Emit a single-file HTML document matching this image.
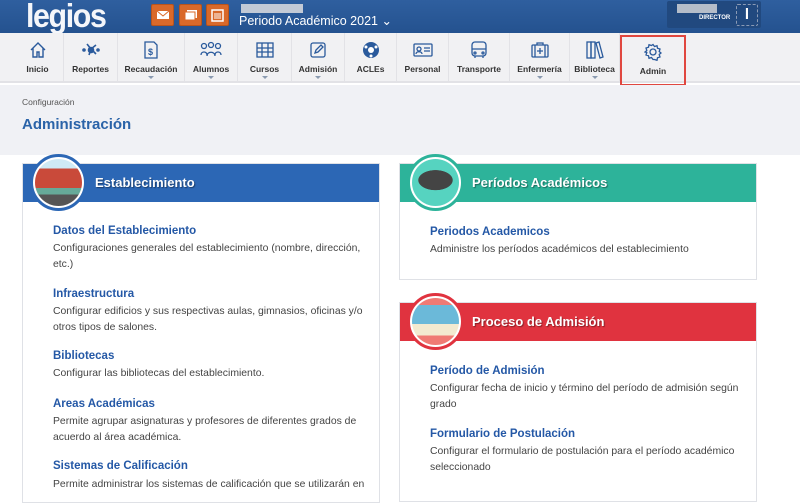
<!DOCTYPE html>
<html><head><meta charset="utf-8"><style>
*{box-sizing:border-box;margin:0;padding:0}
body{width:800px;height:493px;overflow:hidden;font-family:"Liberation Sans",sans-serif;background:#fff;position:relative}
.top{position:absolute;left:0;top:0;width:800px;height:33px;background:linear-gradient(#2f5f9f,#24528f)}
.logo{position:absolute;left:26px;top:-3px;font:bold 33px "Liberation Sans",sans-serif;color:#f4f6fa;letter-spacing:-1.5px;transform:scaleX(.92);transform-origin:left}
.ob{position:absolute;top:4px;width:23px;height:22px;background:#d9692a;border:1px solid #b9541c;border-radius:2px}
.per{position:absolute;left:239px;top:13px;color:#fff;font-size:12.5px}
.blur{position:absolute;background:#c3cad6;height:9px;top:4px}
.dir{position:absolute;left:667px;top:1px;width:94px;height:27px;background:#21497f;border-radius:2px}
.nav{position:absolute;left:0;top:33px;width:800px;height:50px;background:#f1f1f3;border-bottom:2px solid #e2e2e6}
.it{position:absolute;top:0;height:48px;text-align:center;font-size:8.5px;font-weight:bold;color:#333;border-right:1px solid #e2e2e6}
.it svg{position:absolute;top:8px;left:50%;margin-left:-9px}
.it span{position:absolute;left:0;right:0;top:31px}
.it i{position:absolute;left:50%;margin-left:-3px;top:43px;border:3px solid transparent;border-top:3px solid #8a9ab0}
.grey{position:absolute;left:0;top:85px;width:800px;height:70px;background:#f0f1f5}
.bc{position:absolute;left:22px;top:97px;font-size:8.5px;color:#555}
.h1{position:absolute;left:22px;top:116px;font-size:15px;font-weight:bold;color:#2a63a8}
.panel{position:absolute;border:1px solid #dfe1e6;background:#fff}
.ph{position:absolute;left:0;right:0;top:0;height:38px}
.ph b{position:absolute;left:72px;top:11px;color:#fff;font-size:13px;text-shadow:1px 1px 1px rgba(0,0,0,.4)}
.circ{position:absolute;left:7px;top:-10px;width:57px;height:57px;border-radius:50%;border:3px solid;background:#fff}
.circ div{position:absolute;left:2px;top:2px;width:47px;height:47px;border-radius:50%}
.l{position:absolute;font-size:11.5px;font-weight:bold;color:#2458a6}
.d{position:absolute;font-size:10.4px;color:#444;line-height:16px}
</style></head><body>
<div class="top">
<div class="logo">legios</div>
<div class="ob" style="left:151px"></div><div class="ob" style="left:179px"></div><div class="ob" style="left:206px"></div>
<svg style="position:absolute;left:156px;top:10px" width="14" height="10"><rect x="1" y="1" width="12" height="8" fill="#fff"/><path d="M1 1l6 5 6-5" stroke="#d9692a" fill="none"/></svg>
<svg style="position:absolute;left:184px;top:9px" width="14" height="12"><rect x="3" y="1" width="10" height="8" fill="#fff"/><rect x="1" y="3" width="10" height="8" fill="#fff" stroke="#d9692a"/></svg>
<svg style="position:absolute;left:211px;top:8px" width="13" height="14"><rect x="1" y="2" width="11" height="11" fill="none" stroke="#fff" stroke-width="1.5"/><path d="M3 6h7M3 8h7M3 10h7" stroke="#fff"/></svg>
<div class="blur" style="left:241px;width:62px"></div>
<div class="per">Periodo Académico 2021 ⌄</div>
<div class="dir"><div style="position:absolute;left:10px;top:3px;width:40px;height:9px;background:#b5bdc9"></div><div style="position:absolute;left:32px;top:14px;font-size:6px;color:#fff;font-weight:bold">DIRECTOR</div><div style="position:absolute;left:69px;top:3px;width:22px;height:22px;border:1px dashed #8a9ab5;border-radius:2px;color:#fff;font-weight:bold;font-size:15px;text-align:center;line-height:20px">l</div></div>
</div>
<div class="nav">
<div class="it" style="left:12px;width:52px"><svg width="18" height="18" fill="none" stroke="#2a5a9c" stroke-width="1.4"><path d="M2 9L9 2l7 7M4 7v9h4v-5h2v5h4V7"/></svg><span>Inicio</span></div>
<div class="it" style="left:64px;width:54px"><svg width="18" height="18" fill="none" stroke="#2a5a9c" stroke-width="1.6"><path d="M5 3l4 5 5-4M9 8l-2 6M9 8l5 5"/><circle cx="9" cy="9" r="2.5" fill="#2a5a9c"/><circle cx="2" cy="9" r="1" fill="#9ab"/><circle cx="16" cy="9" r="1" fill="#9ab"/></svg><span>Reportes</span></div>
<div class="it" style="left:118px;width:67px"><svg width="18" height="18" fill="none" stroke="#2a5a9c" stroke-width="1.3"><path d="M3 1h9l3 3v13H3z"/><text x="6" y="14" font-size="9" fill="#2a5a9c" stroke="none">$</text></svg><span>Recaudación</span><i></i></div>
<div class="it" style="left:185px;width:53px"><svg width="22" height="18" style="margin-left:-11px" fill="none" stroke="#2a5a9c" stroke-width="1.3"><circle cx="4" cy="5" r="2.5"/><circle cx="11" cy="4" r="2.5"/><circle cx="18" cy="5" r="2.5"/><path d="M1 14c0-4 6-4 6 0M7 15c0-5 8-5 8 0M15 14c0-4 6-4 6 0"/></svg><span>Alumnos</span><i></i></div>
<div class="it" style="left:238px;width:54px"><svg width="18" height="18" fill="none" stroke="#2a5a9c" stroke-width="1.3"><rect x="1" y="2" width="16" height="14"/><path d="M1 7h16M1 11h16M6 2v14M12 2v14"/></svg><span>Cursos</span><i></i></div>
<div class="it" style="left:292px;width:53px"><svg width="18" height="18" fill="none" stroke="#2a5a9c" stroke-width="1.3"><rect x="2" y="2" width="14" height="14" rx="2"/><path d="M6 12l1-3 5-5 2 2-5 5z"/></svg><span>Admisión</span><i></i></div>
<div class="it" style="left:345px;width:52px"><svg width="18" height="18"><circle cx="9" cy="9" r="8" fill="#2a5a9c"/><circle cx="9" cy="9" r="3" fill="#fff"/><circle cx="4" cy="6" r="1.5" fill="#fff"/><circle cx="14" cy="6" r="1.5" fill="#fff"/><circle cx="9" cy="15" r="1.5" fill="#fff"/></svg><span>ACLEs</span></div>
<div class="it" style="left:397px;width:52px"><svg width="20" height="18" style="margin-left:-10px" fill="none" stroke="#2a5a9c" stroke-width="1.3"><rect x="1" y="3" width="18" height="12" rx="1"/><circle cx="6" cy="8" r="2"/><path d="M3 13c0-3 6-3 6 0M11 7h6M11 10h6"/></svg><span>Personal</span></div>
<div class="it" style="left:449px;width:61px"><svg width="18" height="18" fill="none" stroke="#2a5a9c" stroke-width="1.3"><rect x="2" y="1" width="14" height="14" rx="3"/><path d="M2 8h14M5 15v2M13 15v2"/><circle cx="5" cy="12" r="1"/><circle cx="13" cy="12" r="1"/></svg><span>Transporte</span></div>
<div class="it" style="left:510px;width:60px"><svg width="18" height="18" fill="none" stroke="#2a5a9c" stroke-width="1.3"><rect x="1" y="4" width="16" height="12" rx="1"/><path d="M6 4V2h6v2M9 7v6M6 10h6M4 4v12M14 4v12"/></svg><span>Enfermería</span><i></i></div>
<div class="it" style="left:570px;width:50px"><svg width="18" height="18" fill="none" stroke="#2a5a9c" stroke-width="1.3"><rect x="1" y="1" width="4" height="16"/><rect x="5" y="1" width="4" height="16"/><path d="M10 2l3-1 4 15-3 1z"/></svg><span>Biblioteca</span><i></i></div>
<div class="it" style="left:620px;width:66px;border:2px solid #e0473f;height:51px;top:2px"><svg width="18" height="18" style="top:6px" fill="none" stroke="#2a5a9c" stroke-width="1.3"><circle cx="9" cy="9" r="3"/><path d="M9 1.5l1.5 2 2.5-.8.5 2.5 2.5.8-.8 2.5 1.8 1.5-1.8 1.5.8 2.5-2.5.8-.5 2.5-2.5-.8L9 16.5l-1.5-2-2.5.8-.5-2.5-2.5-.8.8-2.5L1 9l1.8-1.5L2 5l2.5-.8.5-2.5 2.5.8z"/></svg><span style="top:29px">Admin</span></div>
</div>
<div class="grey"></div>
<div class="bc">Configuración</div>
<div class="h1">Administración</div>

<div class="panel" style="left:22px;top:163px;width:358px;height:340px">
<div class="ph" style="background:#2c67b5"><b>Establecimiento</b></div>
<div class="circ" style="border-color:#2c67b5"><div style="background:linear-gradient(#cfeaf5 0 20%,#c94a3a 20% 62%,#6a9 62% 75%,#555 75%)"></div></div>
<div class="l" style="left:30px;top:61px">Datos del Establecimiento</div>
<div class="d" style="left:30px;top:77px;width:318px">Configuraciones generales del establecimiento (nombre, dirección, etc.)</div>
<div class="l" style="left:30px;top:124px">Infraestructura</div>
<div class="d" style="left:30px;top:140px;width:318px">Configurar edificios y sus respectivas aulas, gimnasios, oficinas y/o otros tipos de salones.</div>
<div class="l" style="left:30px;top:186px">Bibliotecas</div>
<div class="d" style="left:30px;top:202px;width:318px">Configurar las bibliotecas del establecimiento.</div>
<div class="l" style="left:30px;top:234px">Areas Académicas</div>
<div class="d" style="left:30px;top:250px;width:318px">Permite agrupar asignaturas y profesores de diferentes grados de acuerdo al área académica.</div>
<div class="l" style="left:30px;top:296px">Sistemas de Calificación</div>
<div class="d" style="left:30px;top:313px;width:340px;white-space:nowrap">Permite administrar los sistemas de calificación que se utilizarán en</div>
</div>

<div class="panel" style="left:399px;top:163px;width:358px;height:117px">
<div class="ph" style="background:#2db39a"><b>Períodos Académicos</b></div>
<div class="circ" style="border-color:#2db39a"><div style="background:radial-gradient(ellipse 60% 35% at 50% 45%,#444 0 60%,#56d3c0 62%)"></div></div>
<div class="l" style="left:30px;top:62px">Periodos Academicos</div>
<div class="d" style="left:30px;top:78px">Administre los períodos académicos del establecimiento</div>
</div>

<div class="panel" style="left:399px;top:302px;width:358px;height:200px">
<div class="ph" style="background:#e0333f"><b>Proceso de Admisión</b></div>
<div class="circ" style="border-color:#e0333f"><div style="background:linear-gradient(#f07a74 0 15%,#6bb9d9 15% 55%,#f3ead0 55% 80%,#f07a74 80%)"></div></div>
<div class="l" style="left:30px;top:62px">Período de Admisión</div>
<div class="d" style="left:30px;top:78px;width:318px">Configurar fecha de inicio y término del período de admisión según grado</div>
<div class="l" style="left:30px;top:125px">Formulario de Postulación</div>
<div class="d" style="left:30px;top:141px;width:318px">Configurar el formulario de postulación para el período académico seleccionado</div>
</div>
</body></html>
